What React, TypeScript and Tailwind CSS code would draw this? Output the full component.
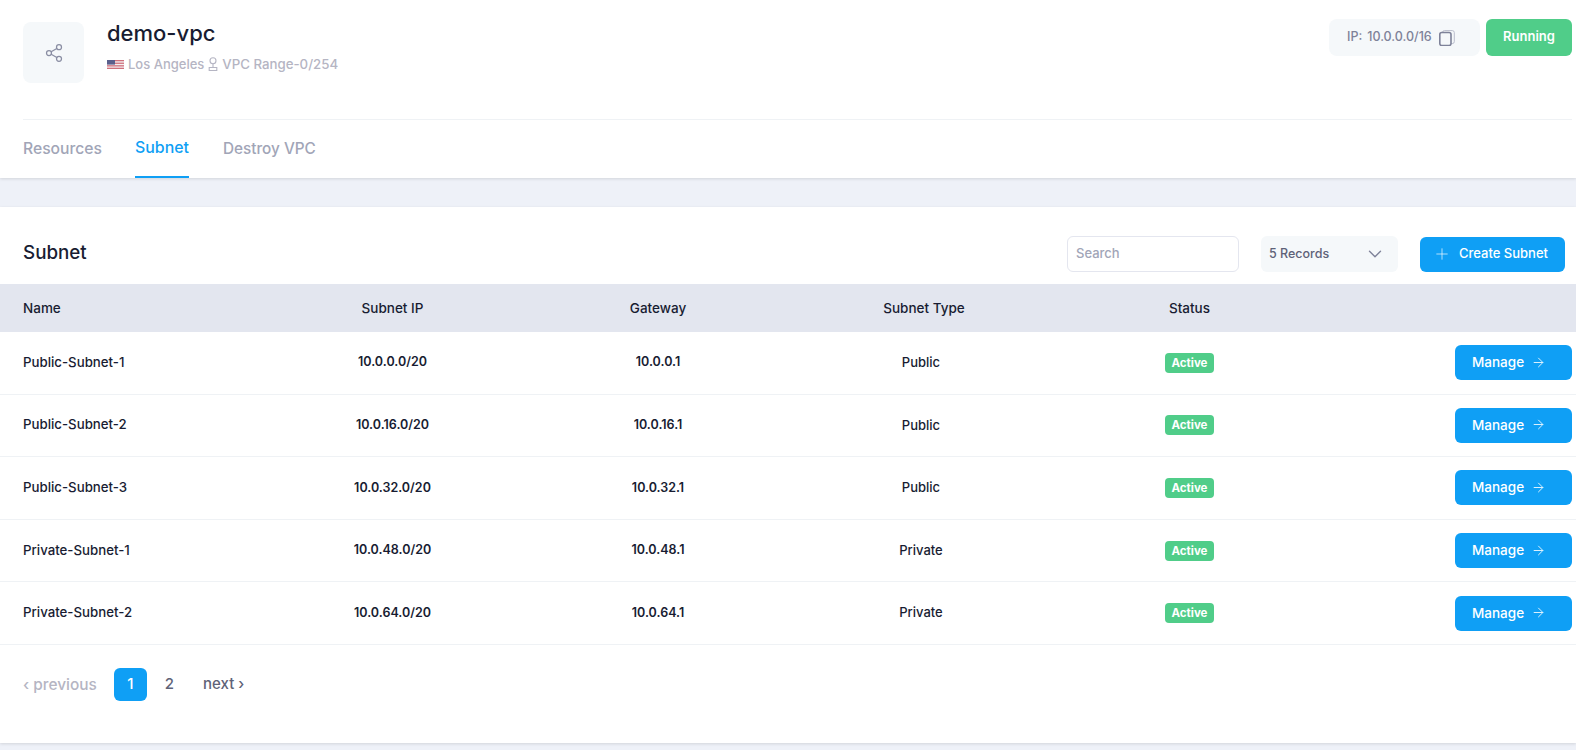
import React from 'react';
import { ArrowRight, ChevronDown, Plus, Share2 } from 'lucide-react';

const font = "font-['Inter',sans-serif]";

const subnets = [
  { name: 'Public-Subnet-1', ip: '10.0.0.0/20', gateway: '10.0.0.1', type: 'Public' },
  { name: 'Public-Subnet-2', ip: '10.0.16.0/20', gateway: '10.0.16.1', type: 'Public' },
  { name: 'Public-Subnet-3', ip: '10.0.32.0/20', gateway: '10.0.32.1', type: 'Public' },
  { name: 'Private-Subnet-1', ip: '10.0.48.0/20', gateway: '10.0.48.1', type: 'Private' },
  { name: 'Private-Subnet-2', ip: '10.0.64.0/20', gateway: '10.0.64.1', type: 'Private' },
];

const Flag = () => (
  <svg width="17" height="9" viewBox="0 0 17 9" className="shrink-0">
    <rect width="17" height="9" fill="#f4f0f2" />
    <rect width="17" height="1.3" fill="#d0707c" />
    <rect y="2.6" width="17" height="1.3" fill="#d0707c" />
    <rect y="5.2" width="17" height="1.3" fill="#d0707c" />
    <rect y="7.7" width="17" height="1.3" fill="#d0707c" />
    <rect width="8" height="4.6" fill="#5a5f8c" />
  </svg>
);

const Pin = () => (
  <svg width="10" height="15" viewBox="0 0 10 15" fill="none" stroke="#b5b5c3" strokeWidth="1.1" className="shrink-0">
    <circle cx="5" cy="3.8" r="3" />
    <path d="M5 6.8v3.7M1.2 10.5v3h7.6v-3H1.2z" />
  </svg>
);

const CopyIcon = () => (
  <svg width="16" height="16" viewBox="0 0 16 16" fill="none" className="ml-[7px] shrink-0">
    <rect x="3.5" y="0.6" width="11.8" height="13" rx="2" stroke="#b9bccb" strokeWidth="1" />
    <rect x="0.8" y="2.5" width="11.2" height="13" rx="2" fill="#f5f8fa" stroke="#7e8299" strokeWidth="1.6" />
  </svg>
);

const Row = ({ s }: { s: (typeof subnets)[number] }) => (
  <div className="grid h-[62.6px] grid-cols-[237px_265px_266px_266px_265px_1fr] items-center border-b border-[#eff2f5] pl-[23px] pr-[4px]">
    <div className="text-[13.25px] font-medium text-[#181c32]">{s.name}</div>
    <div className="text-center text-[12.5px] font-semibold text-[#181c32]">{s.ip}</div>
    <div className="text-center text-[12.5px] font-semibold text-[#181c32]">{s.gateway}</div>
    <div className="pr-[6px] text-center text-[13px] font-medium text-[#181c32]">{s.type}</div>
    <div className="flex justify-center">
      <span className="rounded-[4px] bg-[#50cd89] px-[7px] py-[3px] text-[11.5px] leading-[14px] font-bold text-white">Active</span>
    </div>
    <div className="flex justify-end">
      <button className="flex h-[35px] w-[117px] items-center gap-[7px] rounded-[6px] bg-[#0f9ff5] pb-[1px] pl-[17px] text-[13.5px] font-medium text-white">
        Manage
        <ArrowRight size={15} strokeWidth={1.6} className="opacity-85" />
      </button>
    </div>
  </div>
);

export default function App() {
  return (
    <div className={`${font} min-h-[750px] bg-[#eef1f8]`}>
      {/* Header */}
      <div className="bg-white pl-[23px] pr-[4px] shadow-[0_1px_3px_rgba(0,0,0,0.12)]">
        <div className="flex h-[120px] items-start justify-between border-b border-[#eff2f5]">
          <div className="flex pt-[22px]">
            <div className="flex h-[61px] w-[61px] items-center justify-center rounded-[8px] bg-[#f5f8fa]">
              <Share2 size={20} strokeWidth={1.5} className="text-[#8a8ea3]" />
            </div>
            <div className="-mt-[1px] ml-[23px]">
              <div className="text-[22px] leading-[24px] font-medium text-[#181c32]">demo-vpc</div>
              <div className="mt-[10px] flex items-center gap-[4px] text-[13px] font-medium text-[#b5b5c3]">
                <Flag />
                <span>Los Angeles</span>
                <Pin />
                <span className="text-[13.25px]">VPC Range-0/254</span>
              </div>
            </div>
          </div>
          <div className="mt-[19px] flex gap-[6px]">
            <div className="flex h-[37px] w-[151px] items-center rounded-[8px] bg-[#f5f8fa] pl-[18px] text-[12.5px] font-medium text-[#7e8299]">
              <span>IP:</span>
              <span className="ml-[5px]">10.0.0.0/16</span>
              <CopyIcon />
            </div>
            <div className="flex h-[37px] w-[86px] items-center justify-center rounded-[6px] bg-[#50cd89] pb-[2px] text-[13px] font-semibold text-white">Running</div>
          </div>
        </div>
        <div className="flex h-[58px] text-[15.7px] font-medium">
          <div className="flex items-center text-[#a1a5b7]">Resources</div>
          <div className="ml-[33px] flex items-center border-b-2 border-[#0f9ff5] text-[15.9px] text-[#0f9ff5]">Subnet</div>
          <div className="ml-[34px] flex items-center text-[15.3px] text-[#a1a5b7]">Destroy VPC</div>
        </div>
      </div>

      {/* Subnet table */}
      <div className="mt-[29px] h-[536px] bg-white shadow-[0_1px_3px_rgba(0,0,0,0.12)]">
        <div className="flex h-[77px] items-center pl-[23px] pr-[11px] pt-[17px]">
          <div className="-mt-[1px] text-[18.8px] font-medium text-[#181c32]">Subnet</div>
          <div className="ml-auto flex h-[36px] w-[172px] items-center rounded-[6px] border border-[#e4e6ef] px-[8px] text-[13px] font-medium text-[#a1a5b7]">Search</div>
          <div className="ml-[22px] flex h-[36px] w-[137px] items-center justify-between rounded-[6px] bg-[#f5f8fa] pl-[8px] pr-[12px] text-[12.5px] font-medium text-[#5e6278]">
            5 Records
            <ChevronDown size={22} strokeWidth={1.5} className="text-[#7e8299]" />
          </div>
          <button className="ml-[22px] flex h-[35px] w-[145px] items-center gap-[8px] rounded-[6px] bg-[#0f9ff5] pl-[13px] text-[13px] font-medium text-white">
            <Plus size={18} strokeWidth={0.9} />
            Create Subnet
          </button>
        </div>
        <div className="grid h-[48px] grid-cols-[237px_265px_266px_266px_265px_1fr] items-center bg-[#e3e6ef] pl-[23px] text-[13.5px] font-medium text-[#181c32]">
          <div>Name</div>
          <div className="text-center">Subnet IP</div>
          <div className="text-center">Gateway</div>
          <div className="text-center">Subnet Type</div>
          <div className="text-center">Status</div>
          <div />
        </div>
        {subnets.map(s => (
          <Row key={s.name} s={s} />
        ))}
        <div className="flex items-center pl-[23px] pt-[23px] text-[15px] font-medium">
          <span className="mr-[17px] text-[15.4px] text-[#b5b5c3]">‹ previous</span>
          <span className="flex h-[33px] w-[33px] items-center justify-center rounded-[6px] bg-[#0f9ff5] text-white">1</span>
          <span className="ml-[18px] text-[#5e6278]">2</span>
          <span className="ml-[29px] text-[#5e6278]">next ›</span>
        </div>
      </div>
    </div>
  );
}
